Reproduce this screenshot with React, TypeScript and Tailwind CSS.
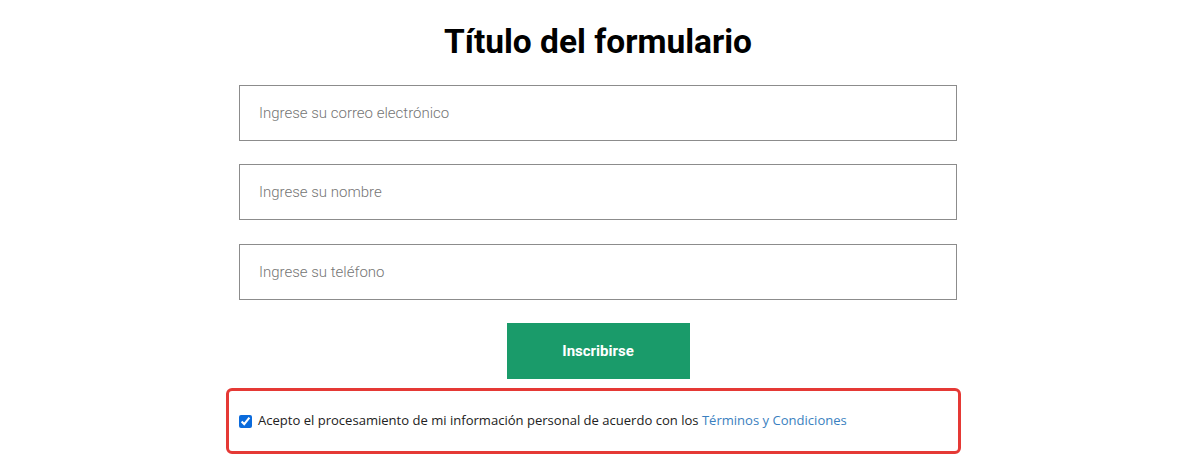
import React from "react";

export default function App() {
  const inputCls =
    "h-[56px] w-full border border-[#8c8c8c] px-[19px] text-[15px] font-light text-[#333] placeholder:text-[#757575] outline-none";
  return (
    <div className="w-[1196px] h-[468px] bg-white flex flex-col items-center" style={{ fontFamily: "Roboto, sans-serif" }}>
      <h1 className="mt-[19px] text-[33.5px] leading-[46px] font-bold text-black" style={{ fontFamily: "Roboto, sans-serif" }}>
        Título del formulario
      </h1>
      <form className="mt-[20px] w-[718px] flex flex-col">
        <input className={inputCls} placeholder="Ingrese su correo electrónico" />
        <input className={`${inputCls} mt-[23px]`} placeholder="Ingrese su nombre" />
        <input className={`${inputCls} mt-[24px]`} placeholder="Ingrese su teléfono" />
      </form>
      <button className="mt-[23px] w-[183px] h-[56px] bg-[#1a9b6a] text-white text-[15px] font-bold">
        Inscribirse
      </button>
      <div className="mt-[9px] self-start ml-[226px] w-[735px] h-[66px] border-[3px] border-[#e53935] rounded-[6px] flex items-center pl-[10px]">
        <label className="flex items-center gap-[6px] text-[13.05px] text-[#222]" style={{ fontFamily: '"Open Sans", sans-serif' }}>
          <input type="checkbox" defaultChecked className="w-[13px] h-[13px] m-0 accent-[#0b6bdc]" />
          <span>
            Acepto el procesamiento de mi información personal de acuerdo con los{" "}
            <a className="text-[#3a7fc0]">Términos y Condiciones</a>
          </span>
        </label>
      </div>
    </div>
  );
}
